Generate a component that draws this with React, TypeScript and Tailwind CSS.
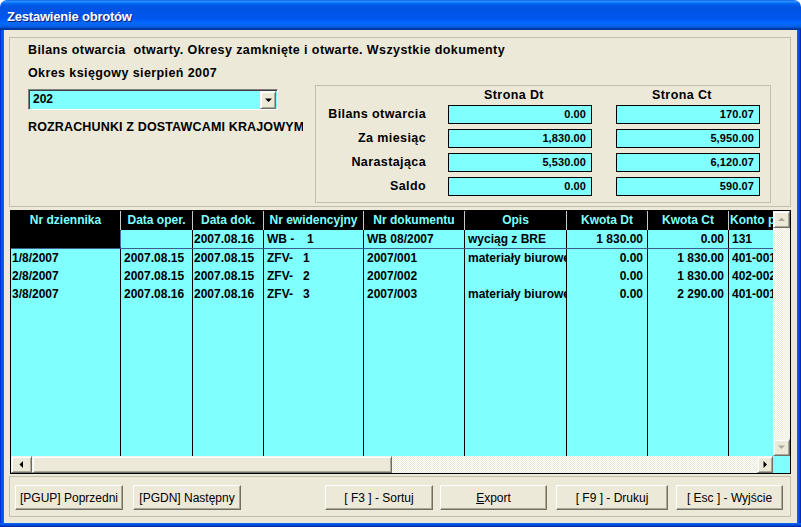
import React from "react"

const font = "font-['Liberation_Sans',Arial,sans-serif]"

const dither =
  "bg-[repeating-conic-gradient(#ffffff_0%_25%,#ece9d8_0%_50%)] bg-[length:2px_2px]"

const colW = [
  "w-[110px]",
  "w-[72px]",
  "w-[71px]",
  "w-[100px]",
  "w-[101px]",
  "w-[102px]",
  "w-[81px]",
  "w-[81px]",
  "w-[44px]",
]

const headers = [
  "Nr dziennika",
  "Data oper.",
  "Data dok.",
  "Nr ewidencyjny",
  "Nr dokumentu",
  "Opis",
  "Kwota Dt",
  "Kwota Ct",
  "Konto przeciwstawne",
]

type Row = {
  dz: string
  op: string
  dok: string
  ewPre: string
  ewNo: string
  nr: string
  opis: string
  dt: string
  ct: string
  konto: string
}

const rows: Row[] = [
  { dz: "", op: "", dok: "2007.08.16", ewPre: "WB -", ewNo: "1", nr: "WB 08/2007", opis: "wyciąg z BRE", dt: "1 830.00", ct: "0.00", konto: "131" },
  { dz: "1/8/2007", op: "2007.08.15", dok: "2007.08.15", ewPre: "ZFV-", ewNo: "1", nr: "2007/001", opis: "materiały biurowe", dt: "0.00", ct: "1 830.00", konto: "401-001" },
  { dz: "2/8/2007", op: "2007.08.15", dok: "2007.08.15", ewPre: "ZFV-", ewNo: "2", nr: "2007/002", opis: "", dt: "0.00", ct: "1 830.00", konto: "402-002" },
  { dz: "3/8/2007", op: "2007.08.16", dok: "2007.08.16", ewPre: "ZFV-", ewNo: "3", nr: "2007/003", opis: "materiały biurowe", dt: "0.00", ct: "2 290.00", konto: "401-001" },
]

const summary = [
  { label: "Bilans otwarcia", dt: "0.00", ct: "170.07" },
  { label: "Za miesiąc", dt: "1,830.00", ct: "5,950.00" },
  { label: "Narastająca", dt: "5,530.00", ct: "6,120.07" },
  { label: "Saldo", dt: "0.00", ct: "590.07" },
]

function Arrow({ dir, color }: { dir: "up" | "down" | "left" | "right"; color: string }) {
  const pts = {
    up: "0,4 7,4 3.5,0.5",
    down: "0,0.5 7,0.5 3.5,4",
    left: "4,0 4,7 0.5,3.5",
    right: "0.5,0 0.5,7 4,3.5",
  }[dir]
  const vertical = dir === "up" || dir === "down"
  return (
    <svg width={vertical ? 7 : 5} height={vertical ? 5 : 7} viewBox={vertical ? "0 0 7 5" : "0 0 5 7"}>
      <polygon points={pts} fill={color} />
    </svg>
  )
}

function ScrollBtn({ children, className = "" }: { children: React.ReactNode; className?: string }) {
  return (
    <div
      className={`shrink-0 flex items-center justify-center bg-[#ece9d8] border-t border-l border-t-[#f4f3ee] border-l-[#f4f3ee] border-b border-r border-b-[#716f64] border-r-[#716f64] shadow-[inset_1px_1px_0_#ffffff,inset_-1px_-1px_0_#aca899] ${className}`}
    >
      {children}
    </div>
  )
}

function Field({ value }: { value: string }) {
  return (
    <div className="w-[144px] h-[19px] border border-black bg-[#80ffff] text-right pr-[5px] text-[11px] leading-[17px] font-bold tracking-[0.1px]">
      {value}
    </div>
  )
}

function Button({ children, className = "" }: { children: React.ReactNode; className?: string }) {
  return (
    <div
      className={`h-[25px] flex items-center justify-center bg-[#ece9d8] text-[12px] text-black border border-t-white border-l-white border-b-[#716f64] border-r-[#716f64] shadow-[inset_-1px_-1px_0_#aca899] ${className}`}
    >
      {children}
    </div>
  )
}

// label text in the upper panel is a touch wider than Arial bold 12
const label = "text-[12.5px] font-bold tracking-[0.4px]"

export default function App() {
  return (
    <div className={`w-[801px] h-[527px] bg-white flex flex-col overflow-hidden ${font}`}>
      {/* Title bar */}
      <div className="h-[30px] shrink-0 rounded-t-[7px] bg-[linear-gradient(180deg,#0058ee_0%,#3593ff_4%,#288eff_6%,#127dff_8%,#036ffc_10%,#0262ee_14%,#0057e5_20%,#0054e3_24%,#0055eb_56%,#005bf5_66%,#026afe_76%,#0062ef_86%,#0052d6_92%,#0040ab_94%,#003092_100%)] flex items-center pl-[7px] pt-[3px]">
        <span className="text-white font-bold text-[13px] tracking-[-0.2px] [text-shadow:1px_1px_0_#0a1e80]">
          Zestawienie obrotów
        </span>
      </div>

      <div className="flex flex-1 min-h-0">
        <div className="w-[4px] shrink-0 bg-[linear-gradient(90deg,#0019cf,#0055ea,#0055ea,#166aee)]" />

        {/* Client area */}
        <div className="flex-1 bg-[#ece9d8] flex flex-col pl-[5px] pr-[6px] pt-[7px] text-black">
          {/* Upper panel */}
          <div className="h-[170px] shrink-0 border border-[#c2bfae] pl-[18px] pt-[4px]">
            <div className={`h-[16px] leading-[16px] whitespace-pre ${label}`}>
              Bilans otwarcia  otwarty. Okresy zamknięte i otwarte. Wszystkie dokumenty
            </div>
            <div className={`h-[16px] leading-[16px] mt-[7px] ${label}`}>Okres księgowy sierpień 2007</div>

            <div className="flex items-start mt-[4px]">
              <div className="w-[275px] shrink-0">
                {/* Combo */}
                <div className="mt-[4px] w-[250px] h-[21px] flex border-t border-l border-t-[#808080] border-l-[#808080] border-b border-r border-b-white border-r-white shadow-[inset_1px_1px_0_#404040] bg-[#80ffff]">
                  <div className="flex-1 pl-[4px] pt-[1px] text-[12px] leading-[17px] font-bold">202</div>
                  <ScrollBtn className="w-[16px] h-[18px] mt-[1px] mr-[1px]">
                    <Arrow dir="down" color="#000000" />
                  </ScrollBtn>
                </div>
                <div className="mt-[9px] h-[16px] leading-[16px] whitespace-nowrap overflow-hidden text-[12.5px] font-bold tracking-[0.15px]">
                  ROZRACHUNKI Z DOSTAWCAMI KRAJOWYMI
                </div>
              </div>

              {/* Summary box */}
              <div className="ml-[12px] w-[456px] h-[118px] border border-[#c2bfae] pt-[1px]">
                <div className={`flex h-[16px] leading-[16px] ${label}`}>
                  <div className="w-[110px]" />
                  <div className="ml-[22px] w-[144px] text-center pr-[12px]">Strona Dt</div>
                  <div className="ml-[24px] w-[144px] text-center pr-[12px]">Strona Ct</div>
                </div>
                <div className="mt-[2px] flex flex-col gap-[5px]">
                  {summary.map((s) => (
                    <div key={s.label} className="flex h-[19px] items-center">
                      <div className={`w-[110px] text-right leading-[16px] -mt-[2px] whitespace-nowrap ${label}`}>
                        {s.label}
                      </div>
                      <div className="ml-[22px]">
                        <Field value={s.dt} />
                      </div>
                      <div className="ml-[24px]">
                        <Field value={s.ct} />
                      </div>
                    </div>
                  ))}
                </div>
              </div>
            </div>
          </div>

          {/* Grid */}
          <div className="mt-[3px] ml-[1px] w-[781px] h-[264px] shrink-0 border border-black flex flex-col text-[12px] font-bold">
            <div className="flex h-[245px]">
              <div className="w-[762px] flex flex-col overflow-hidden bg-[#80ffff]">
                <div className="flex h-[19px] shrink-0 bg-black text-[#80ffff]">
                  {headers.map((h, i) => (
                    <div
                      key={h}
                      className={`${colW[i]} shrink-0 leading-[19px] whitespace-nowrap overflow-hidden ${
                        i < 8 ? "border-r border-[#c8c8c8] text-center" : "pl-[1px]"
                      }`}
                    >
                      {h}
                    </div>
                  ))}
                </div>

                {rows.map((r, ri) => {
                  const first = ri === 0
                  return (
                    <div
                      key={ri}
                      className={`flex shrink-0 leading-[18px] ${first ? "h-[19px] border-b border-[#3d5b8f]" : "h-[18px]"}`}
                    >
                      <div
                        className={`${colW[0]} shrink-0 border-r border-black pl-[1px] overflow-hidden whitespace-nowrap ${
                          first ? "bg-black border border-[#4a6aa5] border-r-[#4a6aa5]" : ""
                        }`}
                      >
                        {r.dz}
                      </div>
                      <div className={`${colW[1]} shrink-0 border-r border-black pl-[3px] overflow-hidden whitespace-nowrap`}>{r.op}</div>
                      <div className={`${colW[2]} shrink-0 border-r border-black pl-[1px] overflow-hidden whitespace-nowrap`}>{r.dok}</div>
                      <div className={`${colW[3]} shrink-0 border-r border-black pl-[3px] flex overflow-hidden whitespace-nowrap`}>
                        <span className={first ? "w-[40px]" : "w-[36px]"}>{r.ewPre}</span>
                        <span>{r.ewNo}</span>
                      </div>
                      <div className={`${colW[4]} shrink-0 border-r border-black pl-[3px] overflow-hidden whitespace-nowrap`}>{r.nr}</div>
                      <div className={`${colW[5]} shrink-0 border-r border-black pl-[3px] overflow-hidden whitespace-nowrap`}>{r.opis}</div>
                      <div className={`${colW[6]} shrink-0 border-r border-black pr-[4px] text-right overflow-hidden whitespace-nowrap`}>{r.dt}</div>
                      <div className={`${colW[7]} shrink-0 border-r border-black pr-[4px] text-right overflow-hidden whitespace-nowrap`}>{r.ct}</div>
                      <div className={`${colW[8]} shrink-0 pl-[3px] overflow-hidden whitespace-nowrap`}>{r.konto}</div>
                    </div>
                  )
                })}

                {/* empty rows continue the column lines */}
                <div className="flex flex-1">
                  {colW.map((w, i) => (
                    <div key={i} className={`${w} shrink-0 ${i < 8 ? "border-r border-black" : ""}`} />
                  ))}
                </div>
              </div>

              {/* Vertical scrollbar */}
              <div className="w-[17px] flex flex-col">
                <ScrollBtn className="h-[17px]">
                  <Arrow dir="up" color="#aca899" />
                </ScrollBtn>
                <div className={`flex-1 ${dither}`} />
                <ScrollBtn className="h-[17px]">
                  <Arrow dir="down" color="#aca899" />
                </ScrollBtn>
              </div>
            </div>

            {/* Horizontal scrollbar */}
            <div className="flex h-[17px]">
              <div className="w-[762px] flex">
                <ScrollBtn className="w-[21px] h-[17px]">
                  <Arrow dir="left" color="#000000" />
                </ScrollBtn>
                <div className="w-[360px] h-[17px] shrink-0 bg-[#ece9d8] border-t border-l border-t-[#f4f3ee] border-l-[#f4f3ee] border-b border-r border-b-[#716f64] border-r-[#716f64] shadow-[inset_1px_1px_0_#ffffff,inset_-1px_-1px_0_#aca899]" />
                <div className={`flex-1 ${dither}`} />
                <ScrollBtn className="w-[16px] h-[17px]">
                  <Arrow dir="right" color="#000000" />
                </ScrollBtn>
              </div>
              <div className="w-[17px] bg-[#80ffff]" />
            </div>
          </div>

          {/* Bottom panel with buttons */}
          <div className="mt-[2px] h-[41px] shrink-0 border border-[#c2bfae] pt-[8px] pl-[5px] flex items-start">
            <Button className="w-[108px]">[PGUP] Poprzedni</Button>
            <Button className="w-[108px] ml-[10px]">[PGDN] Następny</Button>
            <Button className="w-[108px] ml-[84px] whitespace-pre">[ F3 ] - Sortuj</Button>
            <Button className="w-[107px] ml-[7px]">
              <span>
                <span className="underline">E</span>xport
              </span>
            </Button>
            <Button className="w-[112px] ml-[9px] whitespace-pre">[ F9 ] - Drukuj</Button>
            <Button className="w-[107px] ml-[8px] whitespace-pre">[ Esc ] - Wyjście</Button>
          </div>
        </div>

        <div className="w-[4px] shrink-0 bg-[linear-gradient(90deg,#166aee,#0055ea,#0041d1,#001ea0)]" />
      </div>

      <div className="h-[4px] shrink-0 bg-[linear-gradient(180deg,#1665ea,#0055ea,#0042c7,#001ea0)]" />
    </div>
  )
}
